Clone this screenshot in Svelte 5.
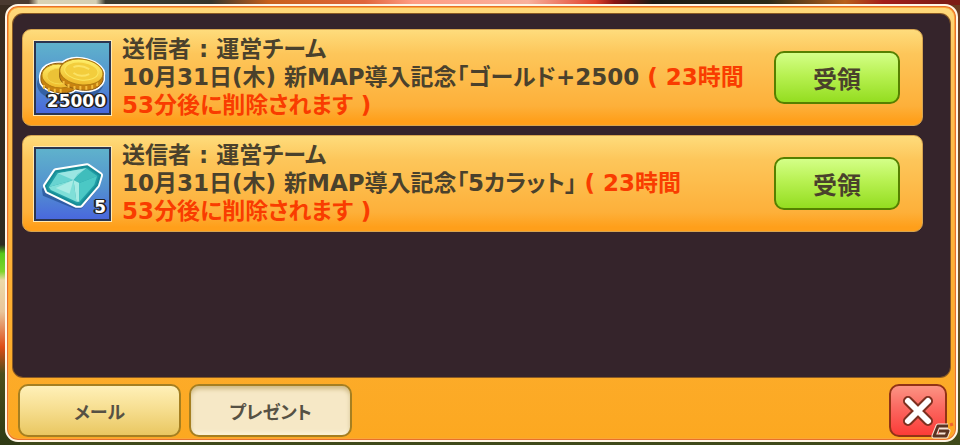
<script>
	let tab = $state('present');

	const tabs = [
		{ id: 'mail', label: 'メール' },
		{ id: 'present', label: 'プレゼント' }
	];

	const presents = [
		{
			kind: 'gold',
			amount: '25000',
			sender: '運営チーム',
			title: '10月31日(木) 新MAP導入記念「ゴールド+2500',
			expires: ['( 23時間', '53分後に削除されます )']
		},
		{
			kind: 'gem',
			amount: '5',
			sender: '運営チーム',
			title: '10月31日(木) 新MAP導入記念「5カラット」',
			expires: ['( 23時間', '53分後に削除されます )']
		}
	];
</script>

<div class="scene">
	<main class="window">
		<ul class="list">
			{#each presents as present}
				<li class="card">
					<div class="item">
						{#if present.kind === 'gold'}
							<svg viewBox="0 0 74 70" aria-hidden="true">
								<defs>
									<linearGradient id="coin" x1="0" y1="0" x2="0" y2="1">
										<stop offset="0" stop-color="#fff06a" />
										<stop offset="1" stop-color="#efb92a" />
									</linearGradient>
								</defs>
								<g fill="#234a84" opacity="0.6">
									<ellipse cx="23" cy="41" rx="22" ry="16" />
									<ellipse cx="45" cy="38" rx="24" ry="18" />
								</g>
								<g fill="#fff" stroke="#fff" stroke-width="4">
									<path d="M5 33C6 24 14 20 24 20S43 25 43 33V39C43 47 34 51 24 50S5 43 5 37Z" />
									<path d="M24 27C25 18 36 14 47 16S70 24 68 33V37C66 45 56 49 44 47S23 39 24 32Z" />
								</g>
								<path d="M5 33C6 24 14 20 24 20S43 25 43 33V39C43 47 34 51 24 50S5 43 5 37Z" fill="#c98310" stroke="#8a5a10" />
								<path d="M8 42v4m5-1v4m6-3v4m6-4v4" stroke="#f3be3e" stroke-width="2" />
								<ellipse cx="24" cy="33" rx="18" ry="12" fill="url(#coin)" stroke="#b47d12" transform="rotate(5 24 33)" />
								<ellipse cx="24" cy="33" rx="13" ry="8" fill="#ecc236" stroke="#f4d84e" />
								<path d="M24 27C25 18 36 14 47 16S70 24 68 33V37C66 45 56 49 44 47S23 39 24 32Z" fill="#c98310" stroke="#8a5a10" />
								<path d="M28 38v4m5-1v4m6-2v4m6-4v4m6-4v4m6-5v4m5-7v4" stroke="#f3be3e" stroke-width="2" />
								<ellipse cx="46" cy="29" rx="22" ry="13" fill="url(#coin)" stroke="#b47d12" transform="rotate(7 46 29)" />
								<ellipse cx="46" cy="28" rx="17" ry="9" fill="#f3cd3c" stroke="#fbe660" transform="rotate(7 46 28)" />
								<path d="M38 24q7 -3 16 2M38 30q7 5 16 1" fill="none" stroke="#fbe264" stroke-width="2" />
							</svg>
						{:else}
							<svg viewBox="0 0 74 70" aria-hidden="true">
								<path d="M19 23L51 18L65 28L62 41L46 60L39 60L7 47L6 40Z" fill="#244f91" opacity="0.7" />
								<path d="M20 22L52 17L65 26L62 36L45 56L41 56L12 42L10 37Z" fill="#fff" stroke="#fff" stroke-width="6" stroke-linejoin="round" />
								<path d="M20 22L52 17L65 26L62 36L45 56L41 56L12 42L10 37Z" fill="#209da5" stroke="#178c96" stroke-width="2" stroke-linejoin="round" />
								<path d="M22 24L51 19L38 31L13 38Z" fill="#68d4d1" />
								<path d="M51 19L62 27L44 34L38 31Z" fill="#40bdbc" />
								<path d="M13 38L38 31L41 53L15 41Z" fill="#7fdfd8" />
								<path d="M38 31L44 34L44 53L41 53Z" fill="#a5ebe4" />
								<path d="M44 34L62 27L59 36L44 53Z" fill="#4bc8c5" />
								<path d="M22 24L38 31L42 25L51 19Z" fill="#9be6e3" />
								<path d="M38 31L20 39L34 45Z" fill="#a9ece5" />
							</svg>
						{/if}
						<span class="amount">{present.amount}</span>
					</div>
					<p class="message">
						送信者 : {present.sender}<br />
						{present.title}
						<em>{present.expires[0]}<br />{present.expires[1]}</em>
					</p>
					<button class="receive" type="button">受領</button>
				</li>
			{/each}
		</ul>

		<footer class="footer">
			{#each tabs as t}
				<button
					class="tab"
					class:active={tab === t.id}
					type="button"
					aria-pressed={tab === t.id}
					onclick={() => (tab = t.id)}>{t.label}</button
				>
			{/each}
			<button class="close" type="button" aria-label="閉じる">
				<svg viewBox="0 0 34 34" aria-hidden="true">
					<path d="M7 7L27 27M27 7L7 27" stroke="#7e3020" stroke-width="10" stroke-linecap="round" />
					<path d="M7 7L27 27M27 7L7 27" stroke="#fff" stroke-width="6" stroke-linecap="round" />
				</svg>
			</button>
		</footer>
	</main>

	<svg class="mark" viewBox="0 0 24 18" aria-hidden="true">
		<g fill="none" stroke-linejoin="round">
			<path d="M17 4H7L3 14H15L17 9H8" stroke="#f7e3d4" stroke-width="5" />
			<path d="M17 4H7L3 14H15L17 9H8" stroke="#5b3322" stroke-width="3" />
			<path d="M19 3l3-1" stroke="#f0642c" stroke-width="3" />
		</g>
	</svg>
</div>

<style>
	:global(body) {
		margin: 0;
	}
	.scene {
		position: relative;
		box-sizing: border-box;
		display: flex;
		min-height: 100vh;
		padding: 4px 2px 3px 5px;
		font-family: 'DejaVu Sans', 'Noto Sans CJK JP', sans-serif;
		font-weight: 700;
		font-feature-settings: 'palt';
		color: #4a412c;
		background:
			linear-gradient(90deg, #4a3a30 3%, #d9d2b4 4%, #d5cfb4 10%, #3a3a30 11%, #35352c 22%, #c8601c 28%, #e0643c 38%, #ff9c84 43%, #f8b09c 55%, #e0402c 62%, #8a1414 64%, #1c1a14 68%, #2a2a18 80%, #b8601c 88%, #a31c1c 92%, #7d1c16 98%) top / 100% 5px no-repeat,
			linear-gradient(#3a2c20, #2e2b20 55%, #58c81c 57%, #7fd42c 61%, #ecd9a8 63%, #e8c59a 70%, #dd4c17 78%, #4c4f1c 84%, #2f3a14) left / 20px 100% no-repeat,
			linear-gradient(#6b3a20, #7a5428 60%, #3f4a1a);
	}
	.window {
		flex: 1;
		display: flex;
		flex-direction: column;
		box-sizing: border-box;
		min-width: 0;
		padding: 5px 6px 3px 5px;
		border: 2px solid #fff6e6;
		border-radius: 13px;
		background: linear-gradient(#ffda7c, #fdc35a 12%, #fdb036 60%, #fca820);
		box-shadow:
			inset 0 0 0 1px #e8702a,
			inset 0 0 0 2px #fba63a;
	}
	.list {
		flex: 1;
		display: flex;
		flex-direction: column;
		gap: 9px;
		margin: 3px 0 0 1px;
		padding: 15px 27px 15px 9px;
		list-style: none;
		border-radius: 10px;
		background: #35242b;
		box-shadow: 0 0 0 1px #8a5a24;
	}
	.card {
		display: flex;
		align-items: center;
		box-sizing: border-box;
		min-height: 97px;
		padding: 4px 22px 4px 11px;
		border: 1px solid #d6a450;
		border-radius: 9px;
		background: linear-gradient(#fedc7c, #fdc65a 25%, #fdb03a 80%, #ff9f1a 96%);
	}
	.item {
		position: relative;
		flex: none;
		width: 73px;
		height: 70px;
		border: 2px solid #2b3550;
		outline: 1px solid #ffeab4;
		background: linear-gradient(#5fb2cc, #5391cf 55%, #4968dd);
	}
	.item svg {
		display: block;
		width: 100%;
		height: 100%;
	}
	.amount {
		position: absolute;
		right: 3px;
		bottom: 2px;
		font-size: 17px;
		line-height: 20px;
		color: #fff;
		text-shadow:
			-1px -1px #222,
			1px -1px #222,
			-1px 1px #222,
			1px 1px #222,
			2px 0 #222,
			-2px 0 #222;
	}
	.message {
		flex: 1;
		min-width: 0;
		margin: 0 0 0 11px;
		padding-bottom: 2px;
		font-size: 23px;
		line-height: 28px;
	}
	.message em {
		font-style: normal;
		color: #f93c00;
	}
	button {
		box-sizing: border-box;
		flex: none;
		padding: 0;
		font: inherit;
		font-feature-settings: inherit;
		color: inherit;
		cursor: pointer;
	}
	.receive {
		width: 126px;
		height: 53px;
		margin-left: 12px;
		border: 2px solid #568000;
		border-radius: 10px;
		background: linear-gradient(#d4ff88, #b8f152 45%, #94dd20);
		font-size: 24px;
	}
	.footer {
		display: flex;
		gap: 8px;
		padding: 7px 3px 0 6px;
	}
	.tab {
		width: 163px;
		height: 53px;
		border: 2px solid #a57f21;
		border-radius: 10px;
		background: linear-gradient(#fff0b8, #f7df92 45%, #e9c761);
		font-size: 18px;
		color: #565144;
	}
	.tab.active {
		background: #f6e8c6;
		box-shadow:
			inset 0 3px 4px #cfb982,
			inset 0 -2px 4px #fff8e0;
	}
	.close {
		display: grid;
		place-items: center;
		width: 58px;
		height: 53px;
		margin-left: auto;
		border: 2px solid #923316;
		border-radius: 10px;
		background: linear-gradient(#fb9484, #fb6860 45%, #fc3c38);
	}
	.close svg {
		width: 34px;
		height: 34px;
	}
	.mark {
		position: absolute;
		right: 5px;
		bottom: 5px;
		width: 24px;
		height: 18px;
		pointer-events: none;
	}
</style>
